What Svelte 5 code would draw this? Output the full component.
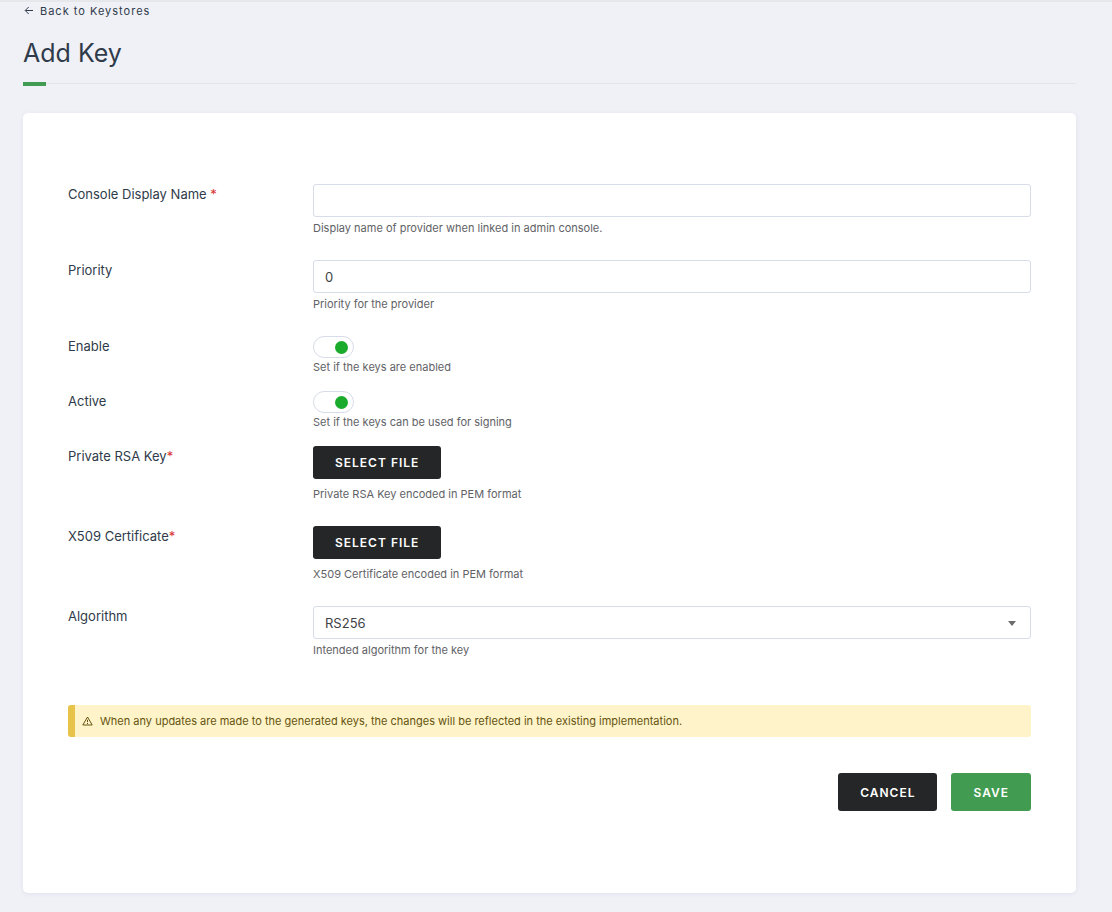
<script lang="ts">
    let displayName = "";
    let priority = "0";
    let enabled = true;
    let active = true;
    let algorithm = "RS256";

    const algorithms = ["RS256", "RS384", "RS512"];

    let privateKeyInput: HTMLInputElement;
    let certificateInput: HTMLInputElement;
</script>

<div class="page">
    <header class="page-header">
        <a class="back-link" href="#keystores">
            <svg width="10" height="10" viewBox="0 0 10 10" aria-hidden="true">
                <path d="M9 4.5H1.5M4.7 1L1.2 4.5 4.7 8" />
            </svg>
            Back to Keystores
        </a>
        <h1>Add Key</h1>
        <div class="divider"></div>
    </header>

    <form class="card" on:submit|preventDefault>
        <div class="row">
            <label for="display-name">
                Console Display Name <span class="required">*</span>
            </label>
            <div class="field">
                <input
                    id="display-name"
                    class="control"
                    type="text"
                    bind:value={displayName}
                />
                <p class="hint">Display name of provider when linked in admin console.</p>
            </div>
        </div>

        <div class="row">
            <label for="priority">Priority</label>
            <div class="field">
                <input
                    id="priority"
                    class="control"
                    type="text"
                    inputmode="numeric"
                    bind:value={priority}
                />
                <p class="hint">Priority for the provider</p>
            </div>
        </div>

        <div class="row compact">
            <label for="enable">Enable</label>
            <div class="field">
                <input id="enable" class="toggle" type="checkbox" bind:checked={enabled} />
                <p class="hint">Set if the keys are enabled</p>
            </div>
        </div>

        <div class="row compact">
            <label for="active">Active</label>
            <div class="field">
                <input id="active" class="toggle" type="checkbox" bind:checked={active} />
                <p class="hint">Set if the keys can be used for signing</p>
            </div>
        </div>

        <div class="row">
            <label for="private-key">Private RSA Key<span class="required">*</span></label>
            <div class="field file">
                <input id="private-key" type="file" accept=".pem" hidden bind:this={privateKeyInput} />
                <button type="button" class="button" on:click={() => privateKeyInput.click()}>
                    Select file
                </button>
                <p class="hint">Private RSA Key encoded in PEM format</p>
            </div>
        </div>

        <div class="row">
            <label for="certificate">X509 Certificate<span class="required">*</span></label>
            <div class="field file">
                <input id="certificate" type="file" accept=".pem" hidden bind:this={certificateInput} />
                <button type="button" class="button" on:click={() => certificateInput.click()}>
                    Select file
                </button>
                <p class="hint">X509 Certificate encoded in PEM format</p>
            </div>
        </div>

        <div class="row">
            <label for="algorithm">Algorithm</label>
            <div class="field">
                <div class="select">
                    <select id="algorithm" class="control" bind:value={algorithm}>
                        {#each algorithms as name}
                            <option value={name}>{name}</option>
                        {/each}
                    </select>
                    <svg width="8" height="5" viewBox="0 0 8 5" aria-hidden="true">
                        <path d="M0 0h8L4 5z" />
                    </svg>
                </div>
                <p class="hint">Intended algorithm for the key</p>
            </div>
        </div>

        <div class="alert" role="note">
            <svg width="11" height="10" viewBox="0 0 11 10" aria-hidden="true">
                <path d="M5.5 1L10.2 9H0.8z" />
                <path d="M5.5 3.8v2.4M5.5 7v1" />
            </svg>
            When any updates are made to the generated keys, the changes will be reflected in the
            existing implementation.
        </div>

        <div class="actions">
            <button type="button" class="button large">Cancel</button>
            <button type="submit" class="button large primary">Save</button>
        </div>
    </form>
</div>

<style>
    :global(body) {
        background-color: #f0f1f7;
    }

    .page {
        padding: 0 36px 19px 23px;
        border-top: 2px solid #e6e7eb;
        color: #2f3b4a;
        font-family: Inter, "Liberation Sans", sans-serif;
        font-size: 13px;
    }

    .back-link {
        display: flex;
        align-items: center;
        gap: 6px;
        line-height: 18px;
        font-size: 11px;
        letter-spacing: 1px;
        color: inherit;
        text-decoration: none;
    }

    .back-link svg {
        margin-left: 1px;
    }

    .back-link path {
        fill: none;
        stroke: currentColor;
    }

    h1 {
        margin: 17px 0 14px;
        font-size: 25px;
        font-weight: 400;
        line-height: 32px;
    }

    .divider {
        height: 4px;
        border-top: 1px solid #e3e4ea;
        box-sizing: border-box;
    }

    .divider::before {
        content: "";
        display: block;
        width: 23px;
        height: 4px;
        margin-top: -2px;
        background-color: #419b51;
    }

    .card {
        margin-top: 26px;
        padding: 71px 45px 82px;
        background-color: white;
        border-radius: 5px;
        box-shadow: 0 1px 4px rgba(50, 50, 110, 0.08);
    }

    .row {
        display: grid;
        grid-template-columns: 245px 1fr;
        margin-bottom: 24px;
    }

    .row.compact {
        margin-bottom: 16px;
    }

    .row label {
        line-height: 20px;
    }

    .required {
        color: #d9302f;
    }

    .field {
        display: flex;
        flex-direction: column;
        align-items: flex-start;
        gap: 3px;
    }

    .compact .field {
        gap: 1px;
    }

    .field.file {
        gap: 7px;
    }

    .control {
        width: 100%;
        height: 33px;
        margin: 0;
        padding: 0 11px;
        box-sizing: border-box;
        border: 1px solid #d8dce8;
        border-radius: 3px;
        background-color: white;
        color: #3f4347;
        font-family: inherit;
        font-size: 13px;
    }

    .select {
        position: relative;
        width: 100%;
    }

    .select select {
        display: block;
        appearance: none;
    }

    .select svg {
        position: absolute;
        top: 15px;
        right: 15px;
        fill: #6c6c6c;
        pointer-events: none;
    }

    .hint {
        margin: 0;
        font-size: 11px;
        line-height: 16px;
        color: #5f6266;
    }

    .toggle {
        display: flex;
        align-items: center;
        justify-content: flex-end;
        appearance: none;
        width: 41px;
        height: 22px;
        margin: 0;
        padding: 0 5px;
        box-sizing: border-box;
        border: 1px solid #d8dce8;
        border-radius: 11px;
        background-color: white;
    }

    .toggle::before {
        content: "";
        width: 13px;
        height: 13px;
        border-radius: 50%;
        background-color: #1aab2d;
    }

    .toggle:not(:checked) {
        justify-content: flex-start;
    }

    .toggle:not(:checked)::before {
        background-color: #a9adb5;
    }

    .button {
        height: 33px;
        padding: 0 22px;
        border: none;
        border-radius: 3px;
        background-color: #252628;
        color: white;
        font-family: inherit;
        font-size: 12px;
        font-weight: 600;
        letter-spacing: 1px;
        text-transform: uppercase;
        cursor: pointer;
    }

    .button.large {
        height: 38px;
    }

    .button.primary {
        background-color: #419b51;
    }

    .alert {
        display: flex;
        align-items: center;
        gap: 7px;
        margin-top: 47px;
        padding: 8px 7px;
        border-left: 7px solid #e8c34a;
        border-radius: 3px;
        background-color: #fff4c9;
        color: #65530f;
        font-size: 11px;
        line-height: 16px;
    }

    .alert path {
        fill: none;
        stroke: currentColor;
        stroke-linejoin: round;
    }

    .actions {
        display: flex;
        justify-content: flex-end;
        gap: 14px;
        margin-top: 36px;
    }
</style>
